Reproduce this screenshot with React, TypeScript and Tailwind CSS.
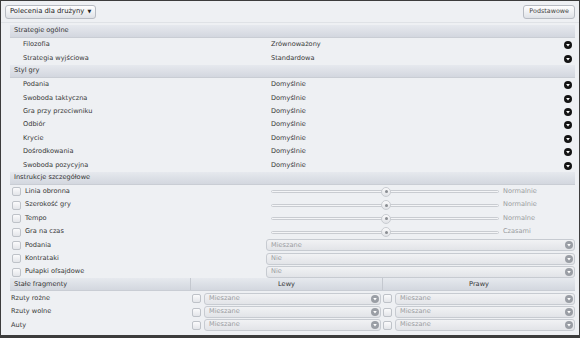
import React from 'react';

const font = { fontFamily: '"DejaVu Sans", Verdana, sans-serif' };

const strategie = [
  { label: 'Filozofia', value: 'Zrównoważony' },
  { label: 'Strategia wyjściowa', value: 'Standardowa' },
];

const styl = [
  'Podania',
  'Swoboda taktyczna',
  'Gra przy przeciwniku',
  'Odbiór',
  'Krycie',
  'Dośrodkowania',
  'Swoboda pozycyjna',
];

const suwaki = [
  { label: 'Linia obronna', value: 'Normalnie' },
  { label: 'Szerokość gry', value: 'Normalnie' },
  { label: 'Tempo', value: 'Normalne' },
  { label: 'Gra na czas', value: 'Czasami' },
];

const wybory = [
  { label: 'Podania', value: 'Mieszane' },
  { label: 'Kontrataki', value: 'Nie' },
  { label: 'Pułapki ofsajdowe', value: 'Nie' },
];

const stale = ['Rzuty rożne', 'Rzuty wolne', 'Auty'];

const DarkArrow = () => (
  <svg width="8" height="8" viewBox="0 0 8 8">
    <circle cx="4" cy="4" r="4" fill="#141414" />
    <path d="M2.1 3 L5.9 3 L4 5.5 Z" fill="#fff" />
  </svg>
);

const GreyArrow = () => (
  <svg width="8" height="8" viewBox="0 0 8 8">
    <circle cx="4" cy="4" r="4" fill="#9a9ea5" />
    <path d="M2.2 3 L5.8 3 L4 5.4 Z" fill="#fff" />
  </svg>
);

const Checkbox = () => (
  <div className="w-[9px] h-[9px] rounded-[2px] border border-[#bec2c8] bg-gradient-to-b from-[#fbfbfc] to-[#e3e5e9] shrink-0" />
);

const Header = ({ children }: { children: React.ReactNode }) => (
  <div className="h-[13px] flex items-center pl-[4px] bg-gradient-to-b from-[#e6e9ee] to-[#d3d7df] border-b border-[#c9cdd4] text-[6.6px] text-[#333]">
    {children}
  </div>
);

const Select = ({ value }: { value: string }) => (
  <div className="flex-1 h-[12px] flex items-center justify-between pl-[4px] pr-[1px] rounded-[3px] border border-[#c7cbd1] bg-gradient-to-b from-[#f1f2f4] to-[#e2e4e8] text-[6.6px] text-[#9a9ca0]">
    <span>{value}</span>
    <GreyArrow />
  </div>
);

const Slider = () => (
  <div className="relative w-[228px] h-[3px] rounded-full border border-[#c9ccd1] bg-[#f4f5f7]">
    <div className="absolute left-[109px] top-[-4.5px] w-[10px] h-[10px] rounded-full border border-[#c9ccd1] bg-gradient-to-b from-[#fafafb] to-[#e1e3e7] flex items-center justify-center">
      <div className="w-[3px] h-[3px] rounded-full bg-[#8a8d92]" />
    </div>
  </div>
);

export default function App() {
  return (
    <div
      className="w-[580px] h-[338px] bg-[#eef0f3] border border-[#3c3c3c] border-b-[3px] overflow-hidden flex flex-col"
      style={font}
    >
      {/* Top bar */}
      <div className="h-[22px] flex items-center justify-between px-[4px] border-b border-[#dfe2e6]">
        <button className="h-[14px] px-[4px] flex items-center gap-[3px] rounded-[3px] border border-[#b7bbc2] bg-gradient-to-b from-[#ffffff] to-[#dfe2e7] text-[6.8px] text-[#222]">
          Polecenia dla drużyny
          <span className="text-[5px]">▼</span>
        </button>
        <button className="h-[14px] px-[5px] flex items-center rounded-[3px] border border-[#b7bbc2] bg-gradient-to-b from-[#ffffff] to-[#dfe2e7] text-[6.4px] text-[#444]">
          Podstawowe
        </button>
      </div>

      <div className="flex flex-col pl-[9px] pr-[4px] pt-[2px] text-[6.6px] text-[#383838]">
        <Header>Strategie ogólne</Header>
        {strategie.map((r) => (
          <div key={r.label} className="h-[13.5px] flex items-center pr-[3px] pt-[1px]">
            <span className="w-[261px] pl-[13px]">{r.label}</span>
            <span className="flex-1">{r.value}</span>
            <DarkArrow />
          </div>
        ))}

        <Header>Styl gry</Header>
        {styl.map((l) => (
          <div key={l} className="h-[13.4px] flex items-center pr-[3px] pt-[1px]">
            <span className="w-[261px] pl-[13px]">{l}</span>
            <span className="flex-1">Domyślnie</span>
            <DarkArrow />
          </div>
        ))}

        <Header>Instrukcje szczegółowe</Header>
        {suwaki.map((r) => (
          <div key={r.label} className="h-[13.4px] flex items-center pt-[1px]">
            <div className="w-[261px] flex items-center gap-[4px] pl-[2px]">
              <Checkbox />
              <span>{r.label}</span>
            </div>
            <Slider />
            <span className="ml-[4px] text-[#9a9ca0]">{r.value}</span>
          </div>
        ))}
        {wybory.map((r) => (
          <div key={r.label} className="h-[13.4px] flex items-center pt-[1px]">
            <div className="w-[256px] flex items-center gap-[4px] pl-[2px]">
              <Checkbox />
              <span>{r.label}</span>
            </div>
            <Select value={r.value} />
          </div>
        ))}

        <div className="h-[13px] flex items-center bg-gradient-to-b from-[#e6e9ee] to-[#d3d7df] border-b border-[#c9cdd4] text-[6.6px] text-[#333]">
          <span className="w-[181px] pl-[4px] h-full flex items-center border-r border-[#c4c8cf]">Stałe fragmenty</span>
          <span className="w-[192px] h-full flex items-center justify-center border-r border-[#c4c8cf]">Lewy</span>
          <span className="flex-1 text-center">Prawy</span>
        </div>
        {stale.map((l) => (
          <div key={l} className="h-[13.4px] flex items-center pt-[1px]">
            <span className="w-[182px] pl-[1px]">{l}</span>
            <div className="w-[189px] flex items-center gap-[3px]">
              <Checkbox />
              <Select value="Mieszane" />
            </div>
            <div className="flex-1 flex items-center gap-[3px] ml-[2px]">
              <Checkbox />
              <Select value="Mieszane" />
            </div>
          </div>
        ))}
      </div>
    </div>
  );
}
